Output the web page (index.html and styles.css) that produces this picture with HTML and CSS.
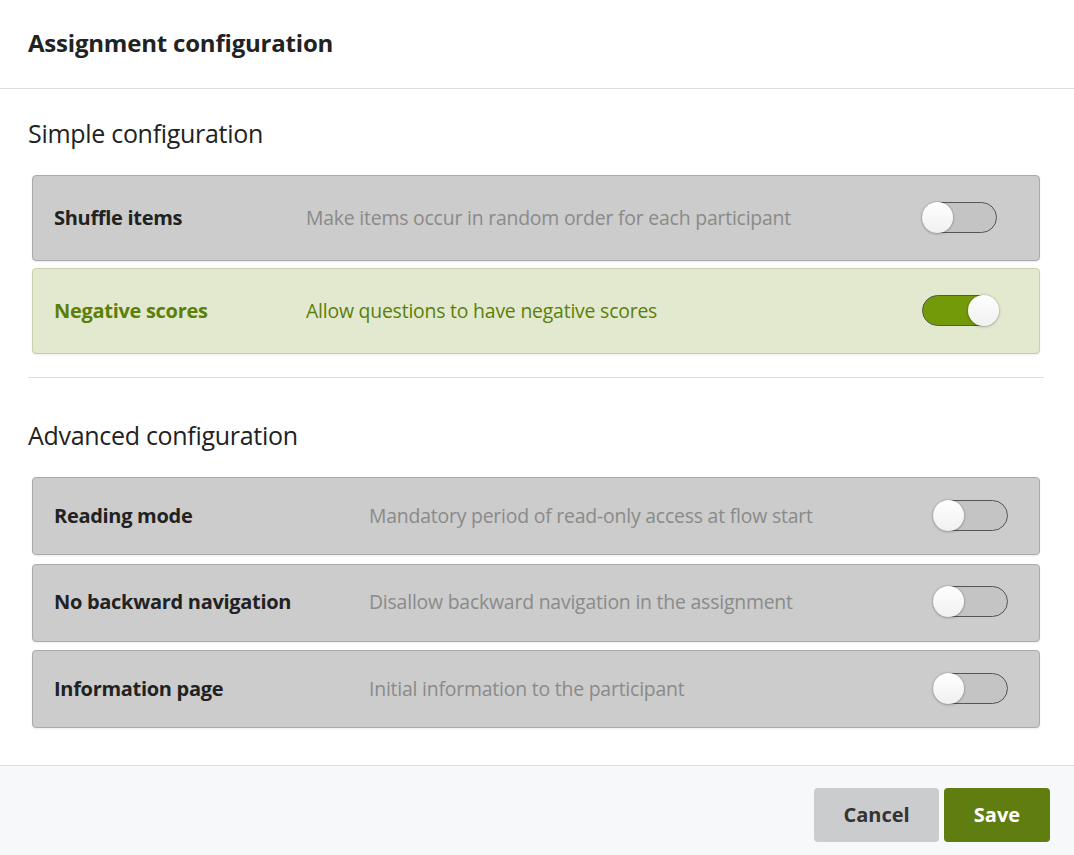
FILE: index.html
```html
<!DOCTYPE html>
<html>
<head>
<meta charset="utf-8">
<link rel="stylesheet" href="styles.css">
</head>
<body>
<div class="dialog">
  <header class="dlg-head">
    <h1 class="dlg-title">Assignment configuration</h1>
  </header>
  <main class="dlg-body">
    <section class="section">
      <h2 class="section-title">Simple configuration</h2>
      <div class="cards simple">
        <div class="card">
          <div class="card-label">Shuffle items</div>
          <div class="card-desc">Make items occur in random order for each participant</div>
          <div class="toggle"><span class="knob"></span></div>
        </div>
        <div class="card card-on">
          <div class="card-label">Negative scores</div>
          <div class="card-desc">Allow questions to have negative scores</div>
          <div class="toggle toggle-on"><span class="knob"></span></div>
        </div>
      </div>
    </section>
    <hr class="divider">
    <section class="section">
      <h2 class="section-title">Advanced configuration</h2>
      <div class="cards advanced">
        <div class="card card-adv">
          <div class="card-label">Reading mode</div>
          <div class="card-desc">Mandatory period of read-only access at flow start</div>
          <div class="toggle"><span class="knob"></span></div>
        </div>
        <div class="card card-adv">
          <div class="card-label">No backward navigation</div>
          <div class="card-desc">Disallow backward navigation in the assignment</div>
          <div class="toggle"><span class="knob"></span></div>
        </div>
        <div class="card card-adv">
          <div class="card-label">Information page</div>
          <div class="card-desc">Initial information to the participant</div>
          <div class="toggle"><span class="knob"></span></div>
        </div>
      </div>
    </section>
  </main>
  <footer class="dlg-foot">
    <button class="btn btn-cancel">Cancel</button>
    <button class="btn btn-save">Save</button>
  </footer>
</div>
</body>
</html>
```

FILE: styles.css
```css
* { box-sizing: border-box; }
html, body {
  margin: 0;
  padding: 0;
  background: #ffffff;
  font-family: "Open Sans", "Noto Sans", sans-serif;
  color: #222222;
}
.dialog {
  width: 1074px;
  height: 855px;
  display: flex;
  flex-direction: column;
}
.dlg-head {
  height: 89px;
  border-bottom: 1px solid #dddddd;
  padding: 0 28px;
  display: flex;
  align-items: center;
}
.dlg-title {
  margin: 0 0 3px 0;
  font-size: 24px;
  font-weight: 700;
  color: #222222;
  letter-spacing: -0.2px;
}
.dlg-body {
  flex: 1;
  padding: 26px 30px 0 28px;
}
.section-title {
  margin: 0 0 24px 0;
  font-size: 25px;
  font-weight: 400;
  color: #222222;
  line-height: 36px;
  letter-spacing: -0.3px;
}
.cards {
  display: flex;
  flex-direction: column;
  gap: 7px;
  margin-left: 4px;
  margin-right: 4px;
}
.advanced { gap: 8.5px; }
.card {
  display: grid;
  grid-template-columns: 252px 1fr auto;
  align-items: center;
  height: 86px;
  padding: 0 42px 2px 21px;
  background: #cccccc;
  border: 1px solid #aaaaaa;
  border-radius: 4px;
  box-shadow: 0 1px 2px rgba(0,0,0,0.08);
}
.card-adv {
  grid-template-columns: 315px 1fr auto;
  height: 78px;
  padding-right: 31px;
}
.card-on {
  background: #e3e9cf;
  border-color: #c8d0ae;
}
.card-label {
  font-size: 20px;
  font-weight: 700;
  color: #222222;
  letter-spacing: -0.3px;
}
.card-desc {
  font-size: 19.4px;
  color: #8a8a8a;
  letter-spacing: -0.2px;
}
.card-on .card-label,
.card-on .card-desc { color: #5b7f08; }
.toggle {
  position: relative;
  width: 75px;
  height: 31px;
  border-radius: 16px;
  background: #c4c4c4;
  border: 1px solid #555555;
}
.knob {
  position: absolute;
  top: -1px;
  left: -1px;
  width: 31px;
  height: 31px;
  border-radius: 50%;
  background: linear-gradient(#ffffff, #f0f0f0);
  box-shadow: 0 0 2px rgba(0,0,0,0.3), 0 1px 3px rgba(0,0,0,0.2);
}
.toggle-on {
  background: #739a09;
}
.toggle-on .knob {
  left: auto;
  right: -3px;
}
.divider {
  margin: 23px 0 39px 0;
  border: 0;
  border-top: 1px solid #dddddd;
}
.dlg-foot {
  height: 90px;
  border-top: 1px solid #dddddd;
  background: #f7f8fa;
  display: flex;
  justify-content: flex-end;
  align-items: flex-start;
  gap: 5px;
  padding: 22px 24px 0 0;
}
.btn {
  height: 54px;
  border: 0;
  border-radius: 4px;
  font-family: inherit;
  font-size: 20px;
  font-weight: 700;
  padding-bottom: 3px;
  cursor: pointer;
}
.btn-cancel {
  width: 125px;
  background: #cbccce;
  color: #333333;
}
.btn-save {
  width: 106px;
  background: #607e0f;
  color: #ffffff;
}
```
